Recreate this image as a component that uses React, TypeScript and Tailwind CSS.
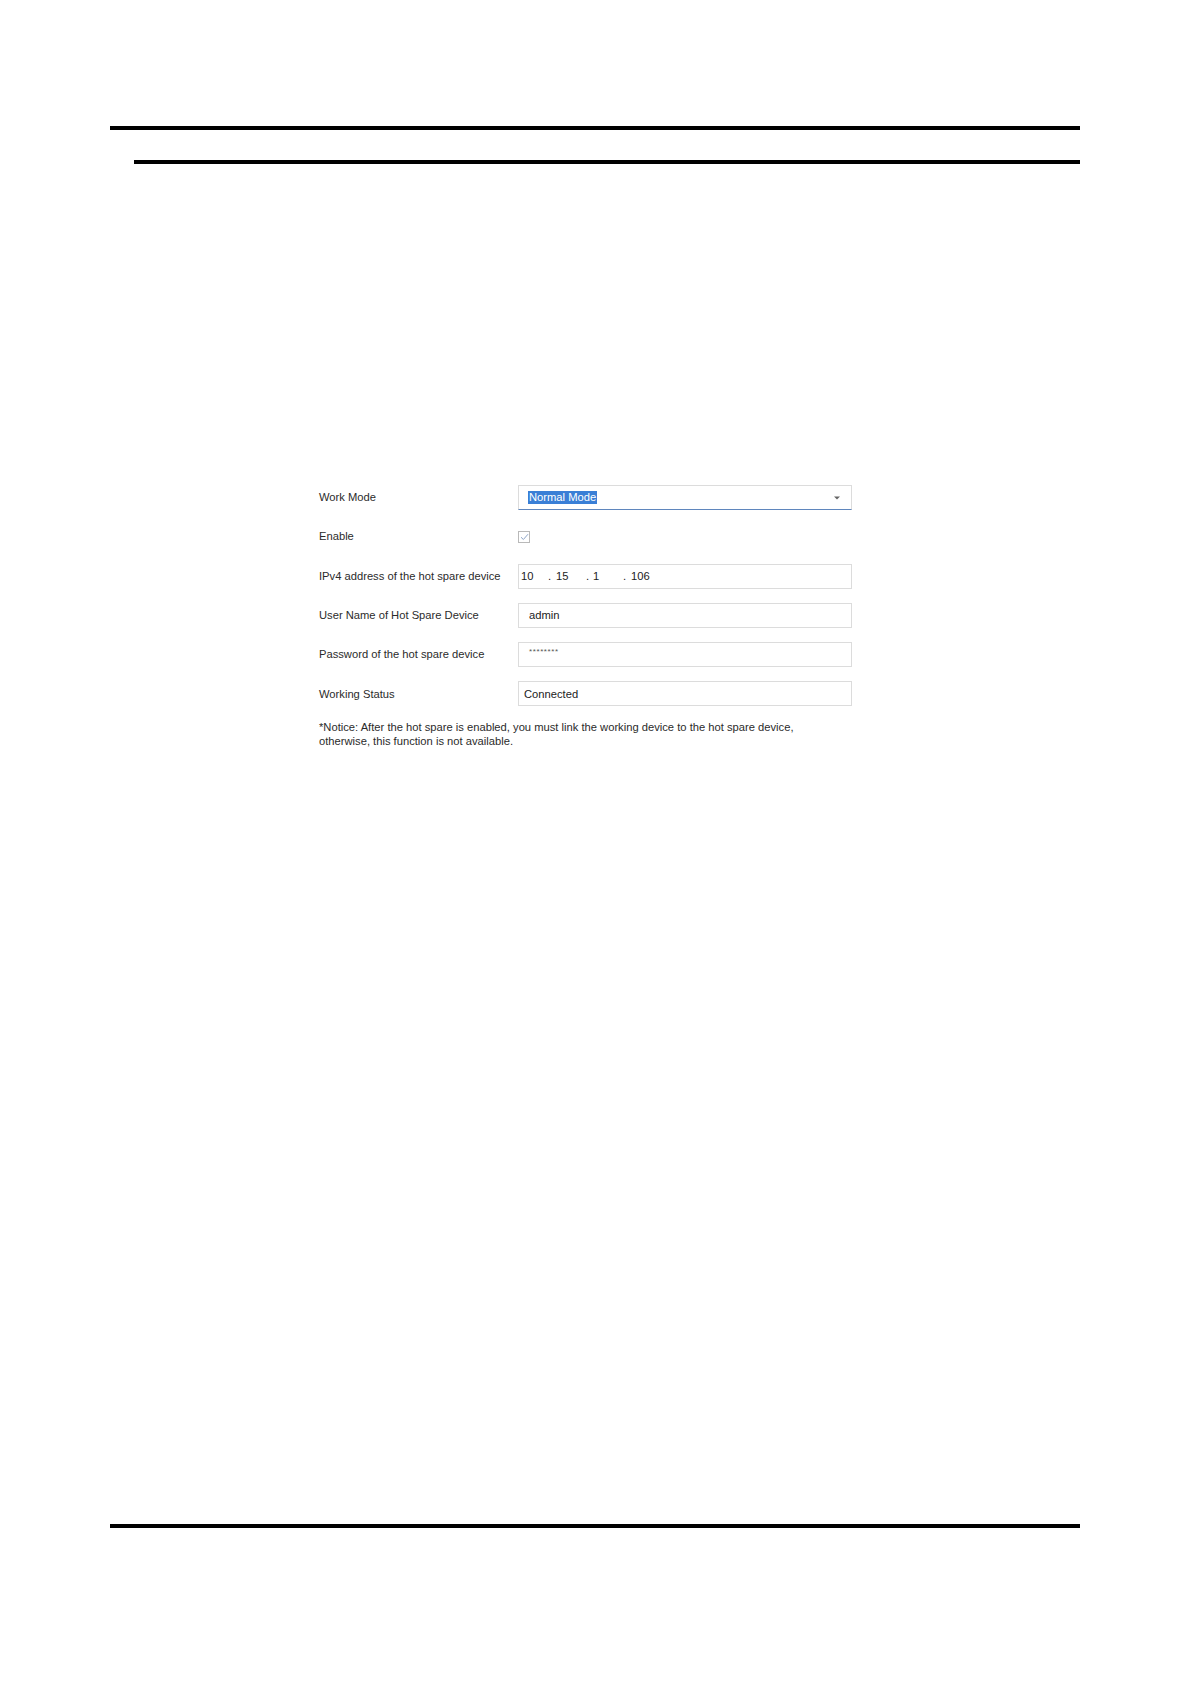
import React from "react";

function Row({ label, children }: { label: string; children: React.ReactNode }) {
  return (
    <div className="flex items-center h-[25px]">
      <div className="w-[199px] shrink-0 text-[11.2px] text-[#2b2b2b]">{label}</div>
      <div className="w-[334px] h-full flex items-center">{children}</div>
    </div>
  );
}

function Box({ children, className = "" }: { children?: React.ReactNode; className?: string }) {
  return (
    <div
      className={
        "w-full h-full border border-[#dcdcdc] bg-white flex items-center text-[11.2px] text-[#222] " +
        className
      }
    >
      {children}
    </div>
  );
}

export default function App() {
  return (
    <div className="w-[1191px] h-[1684px] bg-white flex flex-col font-['Liberation_Sans',Arial,sans-serif]">
      <div className="pt-[126px]">
        <div className="ml-[110px] w-[970px] h-[4px] bg-black" />
        <div className="mt-[30px] ml-[134px] w-[946px] h-[4px] bg-black" />
      </div>

      <div className="flex-1">
        <div className="mt-[321px] ml-[319px] w-[533px] flex flex-col gap-[14.3px]">
          <Row label="Work Mode">
            <Box className="border-[#8aa6cf] border-b-[#5f86bd] pl-[9px] pr-[11px] justify-between">
              <span className="bg-[#3a7fd6] text-white px-[1px] leading-[13px]">Normal Mode</span>
              <svg width="6" height="4" viewBox="0 0 6 4">
                <path d="M0 0.5 L6 0.5 L3 3.5 Z" fill="#666" />
              </svg>
            </Box>
          </Row>

          <Row label="Enable">
            <div className="w-[12px] h-[12px] border border-[#b9b9b9] bg-white flex items-center justify-center">
              <svg width="9" height="8" viewBox="0 0 9 8">
                <path d="M1 4.2 L3.4 6.5 L8 1.2" stroke="#8fa6c8" strokeWidth="1" fill="none" />
              </svg>
            </div>
          </Row>

          <Row label="IPv4 address of the hot spare device">
            <Box className="pl-[2px]">
              <span className="w-[27px]">10</span>
              <span className="w-[8px]">.</span>
              <span className="w-[30px]">15</span>
              <span className="w-[7px]">.</span>
              <span className="w-[30px]">1</span>
              <span className="w-[8px]">.</span>
              <span>106</span>
            </Box>
          </Row>

          <Row label="User Name of Hot Spare Device">
            <Box className="pl-[10px]">admin</Box>
          </Row>

          <Row label="Password of the hot spare device">
            <Box className="pl-[10px] items-start pt-[3px]">
              <span className="text-[8px] tracking-[0.6px] text-[#555]">********</span>
            </Box>
          </Row>

          <Row label="Working Status">
            <Box className="pl-[5px]">Connected</Box>
          </Row>

          <div className="-mt-[1px] text-[11.2px] leading-[14px] text-[#2b2b2b]">
            *Notice: After the hot spare is enabled, you must link the working device to the hot spare device,
            <br />
            otherwise, this function is not available.
          </div>
        </div>
      </div>

      <div className="ml-[110px] w-[970px] h-[4px] bg-black" />
      <div className="h-[156px]" />
    </div>
  );
}
